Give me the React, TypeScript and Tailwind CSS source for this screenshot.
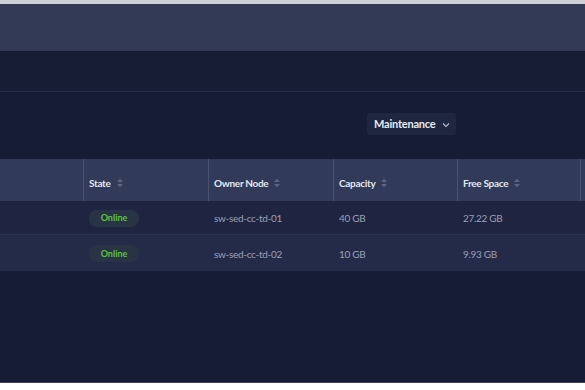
import React from "react";

function SortIcon() {
  return (
    <svg width="6" height="10" viewBox="0 0 6 10" className="ml-[6px]">
      <path d="M3 0.5 L5.8 4 L0.2 4 Z" fill="#5d6584" />
      <path d="M3 9.5 L5.8 6 L0.2 6 Z" fill="#5d6584" />
    </svg>
  );
}

const rows = [
  { node: "sw-sed-cc-td-01", cap: "40 GB", free: "27.22 GB", bg: "bg-[#1f2541]" },
  { node: "sw-sed-cc-td-02", cap: "10 GB", free: "9.93 GB", bg: "bg-[#242b49]" },
];

const headers = [
  { h: "State", w: "w-[125px]" },
  { h: "Owner Node", w: "w-[125px]" },
  { h: "Capacity", w: "w-[124px]" },
  { h: "Free Space", w: "w-[123px]" },
];

export default function App() {
  return (
    <div className="w-[585px] h-[390px] flex flex-col bg-white overflow-hidden" style={{ fontFamily: "Lato, 'Open Sans', sans-serif" }}>
      <div className="h-[4px] bg-[#cfd0d3]" />
      <div className="h-[47px] bg-[#323a56]" />
      <div className="h-[41px] bg-[#181d36] border-b border-[#262c47]" />
      <div className="flex-1 bg-[#171c36] flex flex-col">
        <div className="h-[67px] shrink-0 flex items-start pt-[21px] pl-[367px]">
          <div className="w-[89px] h-[22px] rounded-[3px] bg-[#1f2640] flex items-center pl-[7px] text-[11px] font-bold text-[#e8eaf0] tracking-[-0.2px]">
            Maintenance
            <svg width="8" height="6" viewBox="0 0 8 6" className="ml-[6px] mt-[1px]">
              <path d="M1 1.5 L4 4.5 L7 1.5" stroke="#b8bdcc" strokeWidth="1.1" fill="none" />
            </svg>
          </div>
        </div>
        <div className="flex h-[42px] shrink-0 bg-[#313a58]">
          <div className="w-[84px] border-r border-[#4a5272]" />
          {headers.map(({ h, w }) => (
            <div key={h} className={`${w} border-r border-[#4a5272] flex items-center pl-[5px] pt-[6px] text-[10px] font-bold text-[#e3e6ee] tracking-[-0.3px]`}>
              {h}
              <SortIcon />
            </div>
          ))}
          <div className="flex-1" />
        </div>
        {rows.map((r, i) => (
          <div key={r.node} className={`flex shrink-0 ${i === 0 ? "h-[34px] border-b border-[#2a3150]" : "h-[36px]"} ${r.bg} text-[10px] text-[#9aa0b6] tracking-[-0.3px]`}>
            <div className="w-[84px]" />
            <div className="w-[125px] flex items-center pl-[5px] pt-[1px]">
              <div className="w-[50px] h-[17px] rounded-[8px] bg-[#283345] flex items-center justify-center text-[9px] font-bold text-[#5cc23c] tracking-normal">
                Online
              </div>
            </div>
            <div className="w-[125px] flex items-center pl-[5px] pt-[2px]">{r.node}</div>
            <div className="w-[124px] flex items-center pl-[5px] pt-[2px]">{r.cap}</div>
            <div className="w-[123px] flex items-center pl-[5px] pt-[2px]">{r.free}</div>
          </div>
        ))}
        <div className="flex-1" />
        <div className="h-[1px] bg-[#3b4160]" />
      </div>
      <div className="h-[7px] bg-white" />
    </div>
  );
}
